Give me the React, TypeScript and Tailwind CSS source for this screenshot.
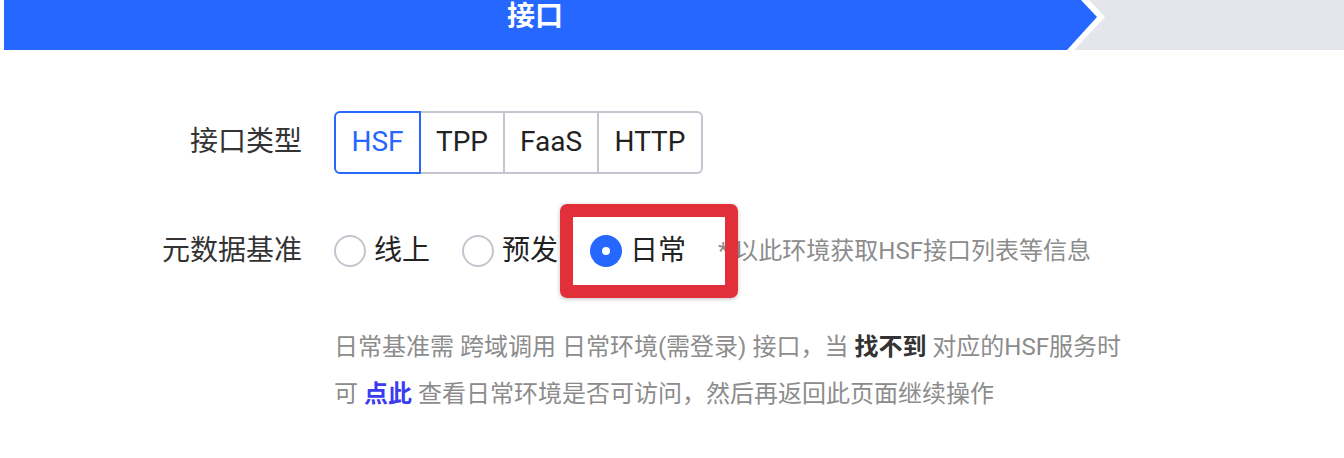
import React from "react";

const font = { fontFamily: 'Roboto, "Noto Sans CJK SC", sans-serif' };

export default function App() {
  return (
    <div className="w-[1344px] h-[458px] bg-white overflow-hidden" style={font}>
      {/* Steps header */}
      <div className="flex h-[50px]">
        <div className="w-[4px] shrink-0" />
        <div
          className="w-[1093px] shrink-0 h-[50px] bg-[#2667ff]"
          style={{ clipPath: "polygon(0 0, 1077px 0, 1093px 17px, 1063px 50px, 0 50px)" }}
        >
          <div className="w-[1062px] h-[34px] flex items-center justify-center text-white text-[28px] font-bold leading-[34px]">
            接口
          </div>
        </div>
        <div
          className="flex-1 ml-[-23px] h-[50px] bg-[#e5e6eb]"
          style={{ clipPath: "polygon(15px 0, 100% 0, 100% 50px, 0 50px, 31px 17px)" }}
        />
      </div>

      {/* Row 1 */}
      <div className="flex items-center mt-[60px] h-[64px]">
        <div className="w-[302px] text-right text-[28px] text-[#333333] leading-none">接口类型</div>
        <div className="ml-[32px] flex h-[63px] text-[28px] text-[#222222]">
          <div className="w-[87px] flex items-center justify-center border-2 border-[#2667ff] text-[#2667ff] rounded-l-[6px]">HSF</div>
          <div className="w-[84px] flex items-center justify-center border-y-2 border-r-2 border-[#c3c5cf]">TPP</div>
          <div className="w-[94px] flex items-center justify-center border-y-2 border-r-2 border-[#c3c5cf]">FaaS</div>
          <div className="w-[104px] flex items-center justify-center border-y-2 border-r-2 border-[#c3c5cf] rounded-r-[6px]">HTTP</div>
        </div>
      </div>

      {/* Row 2 */}
      <div className="relative flex items-center mt-[45px] h-[64px]">
        <div className="w-[302px] text-right text-[28px] text-[#333333] leading-none">元数据基准</div>
        <div className="ml-[32px] flex items-center gap-[32px] text-[28px] text-[#222222]">
          <div className="flex items-center gap-[8px]">
            <span className="w-[32px] h-[32px] rounded-full border-2 border-[#c3c5cf] bg-white" />
            <span className="leading-none">线上</span>
          </div>
          <div className="flex items-center gap-[8px]">
            <span className="w-[32px] h-[32px] rounded-full border-2 border-[#c3c5cf] bg-white" />
            <span className="leading-none">预发</span>
          </div>
          <div className="flex items-center gap-[8px]">
            <span className="w-[32px] h-[32px] rounded-full bg-[#2667ff] flex items-center justify-center">
              <span className="w-[8px] h-[8px] rounded-full bg-white" />
            </span>
            <span className="leading-none">日常</span>
          </div>
          <div className="text-[24px] text-[#8c8c8c] leading-none">* 以此环境获取HSF接口列表等信息</div>
        </div>
        <div className="absolute left-[560px] top-[-15px] w-[178px] h-[94px] border-[13px] border-[#e2303b] rounded-[7px] shadow-[0_1px_4px_rgba(0,0,0,0.25)]" />
      </div>

      {/* Description */}
      <div className="mt-[41px] ml-[334px] text-[24px] leading-[47px] text-[#8c8c8c]">
        <div>
          日常基准需 跨域调用 日常环境(需登录) 接口，当 <span className="font-bold text-[#333333]">找不到</span> 对应的HSF服务时
        </div>
        <div>
          可 <span className="font-bold text-[#3b3bef]">点此</span> 查看日常环境是否可访问，然后再返回此页面继续操作
        </div>
      </div>
    </div>
  );
}
